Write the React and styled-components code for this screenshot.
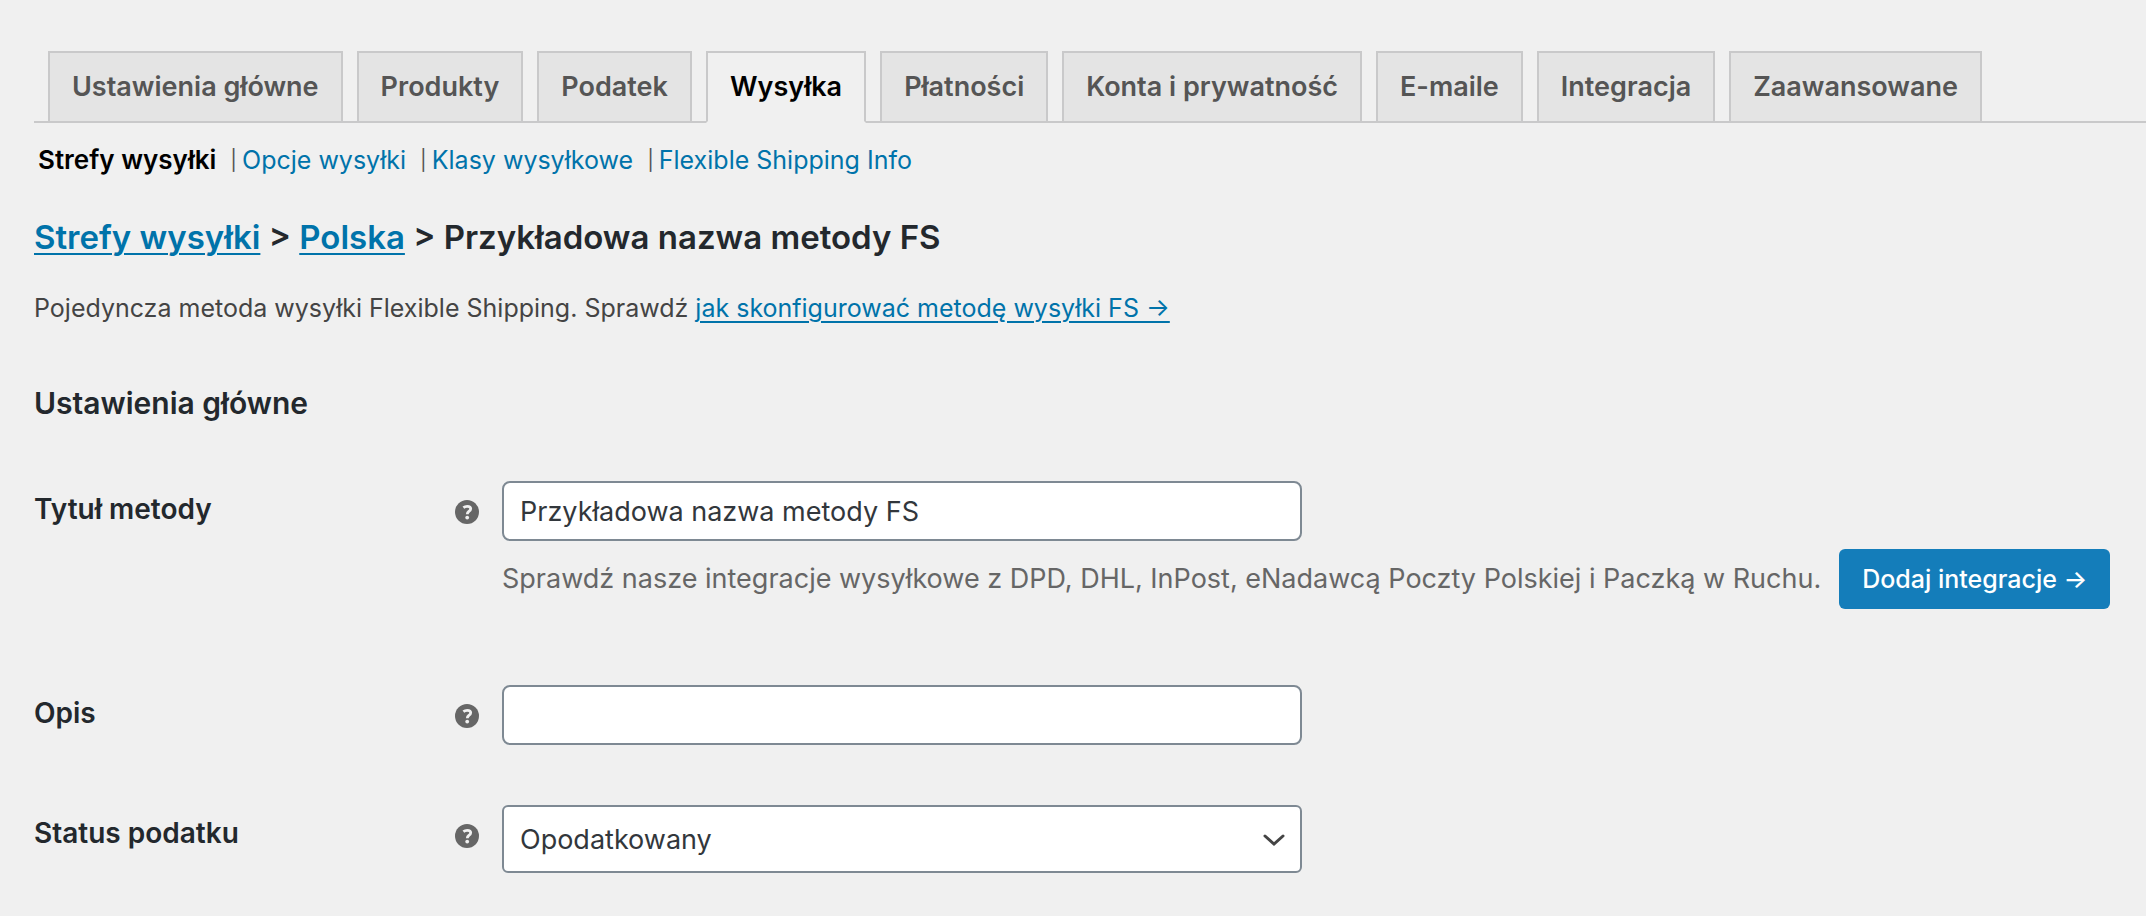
import React from "react";
import styled, { createGlobalStyle } from "styled-components";

const GlobalStyle = createGlobalStyle`
  *, *::before, *::after { box-sizing: border-box; }
  body {
    margin: 0;
    background: #f0f0f0;
    color: #444;
    font-family: Inter, "Open Sans", sans-serif;
    font-size: 25px;
    line-height: 40px;
  }
`;

const Page = styled.main`
  padding: 51px 0 30px 34px;
`;

const Tabs = styled.nav`
  display: flex;
  gap: 14px;
  padding-left: 14px;
  border-bottom: 2px solid #c9c9ca;
`;

const Tab = styled.a`
  margin-bottom: -2px;
  padding: 10px 22px;
  border: 2px solid #c9c9ca;
  border-bottom-color: ${(p) => (p.$active ? "#f0f0f0" : "#c9c9ca")};
  background: ${(p) => (p.$active ? "#f0f0f0" : "#e4e4e4")};
  color: ${(p) => (p.$active ? "#000" : "#555")};
  font-size: 27px;
  font-weight: 600;
  line-height: 48px;
  white-space: nowrap;
  text-decoration: none;
`;

const Sections = styled.ul`
  display: flex;
  flex-wrap: wrap;
  margin: 17px 0 0;
  padding: 0 0 0 4px;
  list-style: none;
  color: #555;
`;

const SectionItem = styled.li`
  display: flex;

  & + &::before {
    content: "|";
    margin: 0 5px 0 14px;
    font-size: 20px;
  }
`;

const SectionLink = styled.a`
  color: ${(p) => (p.$active ? "#000" : "#0073aa")};
  font-size: ${(p) => (p.$active ? "26px" : "25px")};
  font-weight: ${(p) => (p.$active ? 600 : 400)};
  text-decoration: none;
`;

const Breadcrumb = styled.h1`
  margin: 33px 0 0;
  color: #23282d;
  font-size: 33px;
  font-weight: 600;
  line-height: 48px;
`;

const TextLink = styled.a`
  color: #0073aa;
  text-decoration-thickness: 2px;
  text-underline-offset: 4px;
`;

const Intro = styled.p`
  margin: 27px 0 0;
`;

const Heading = styled.h2`
  margin: 55px 0 0;
  color: #23282d;
  font-size: 30px;
  font-weight: 600;
  line-height: 40px;
`;

const Form = styled.form`
  display: flex;
  flex-direction: column;
  margin-top: 28px;
`;

const Row = styled.div`
  display: grid;
  grid-template-columns: 421px 47px minmax(0, 1fr);
  padding: 30px 0;
`;

const Label = styled.label`
  padding-top: 8px;
  color: #23282d;
  font-size: 28px;
  font-weight: 600;
`;

const Help = styled.svg`
  width: 24px;
  height: 24px;
  margin-top: 19px;
`;

const Field = styled.div`
  display: flex;
  flex-direction: column;
  align-items: flex-start;
`;

const TextInput = styled.input`
  width: 800px;
  max-width: 100%;
  height: 60px;
  padding: 0 16px;
  border: 2px solid #7e8993;
  border-radius: 8px;
  background: #fff;
  color: #32373c;
  font-family: inherit;
  font-size: 27px;
`;

const SelectWrap = styled.div`
  display: grid;
  align-items: center;
  width: 800px;
  max-width: 100%;
`;

const Select = styled.select`
  grid-area: 1 / 1;
  width: 100%;
  height: 68px;
  padding: 0 48px 0 16px;
  border: 2px solid #7e8993;
  border-radius: 6px;
  background: #fff;
  color: #32373c;
  font-family: inherit;
  font-size: 27px;
  appearance: none;
`;

const Chevron = styled.svg`
  grid-area: 1 / 1;
  justify-self: end;
  width: 24px;
  height: 16px;
  margin: 2px 16px 0 0;
  pointer-events: none;
`;

const Note = styled.div`
  display: flex;
  align-items: center;
  gap: 18px;
  margin: 8px 0 16px;
  color: #666;
  font-size: 27px;
`;

const ActionButton = styled.button`
  flex: none;
  height: 60px;
  padding: 0 23px;
  border: 0;
  border-radius: 6px;
  background: #147dba;
  color: #fff;
  font-family: inherit;
  font-size: 25px;
  font-weight: 500;
`;

const tabs = [
  "Ustawienia główne",
  "Produkty",
  "Podatek",
  "Wysyłka",
  "Płatności",
  "Konta i prywatność",
  "E-maile",
  "Integracja",
  "Zaawansowane",
];

const sections = [
  "Strefy wysyłki",
  "Opcje wysyłki",
  "Klasy wysyłkowe",
  "Flexible Shipping Info",
];

function HelpIcon() {
  return (
    <Help viewBox="0 0 24 24" aria-hidden="true">
      <circle cx="12" cy="12" r="12" fill="#666" />
      <path
        d="M8.4 7.6c1-.8 2.300-1.300 3.800-1.300 2.100 0 3.500.9 3.500 2.500 0 1.400-.9 2-1.900 2.700-1 .7-1.500 1.300-1.500 2.700"
        fill="none"
        stroke="#f0f0f0"
        strokeWidth="2.8"
      />
      <circle cx="12.2" cy="17.6" r="1.9" fill="#f0f0f0" />
    </Help>
  );
}

function FormRow({ id, label, children }) {
  return (
    <Row>
      <Label htmlFor={id}>{label}</Label>
      <HelpIcon />
      <Field>{children}</Field>
    </Row>
  );
}

export default function App() {
  return (
    <>
      <GlobalStyle />
      <Page>
        <Tabs>
          {tabs.map((name) => (
            <Tab key={name} href="#" $active={name === "Wysyłka"}>
              {name}
            </Tab>
          ))}
        </Tabs>
        <Sections>
          {sections.map((name, i) => (
            <SectionItem key={name}>
              <SectionLink href="#" $active={i === 0}>
                {name}
              </SectionLink>
            </SectionItem>
          ))}
        </Sections>
        <Breadcrumb>
          <TextLink href="#">Strefy wysyłki</TextLink> &gt;{" "}
          <TextLink href="#">Polska</TextLink> &gt; Przykładowa nazwa metody FS
        </Breadcrumb>
        <Intro>
          Pojedyncza metoda wysyłki Flexible Shipping. Sprawdź{" "}
          <TextLink href="#">jak skonfigurować metodę wysyłki FS →</TextLink>
        </Intro>
        <Heading>Ustawienia główne</Heading>
        <Form>
          <FormRow id="title" label="Tytuł metody">
            <TextInput id="title" type="text" defaultValue="Przykładowa nazwa metody FS" />
            <Note>
              <span>
                Sprawdź nasze integracje wysyłkowe z DPD, DHL, InPost, eNadawcą Poczty Polskiej i
                Paczką w Ruchu.
              </span>
              <ActionButton type="button">Dodaj integracje →</ActionButton>
            </Note>
          </FormRow>
          <FormRow id="description" label="Opis">
            <TextInput id="description" type="text" />
          </FormRow>
          <FormRow id="tax-status" label="Status podatku">
            <SelectWrap>
              <Select id="tax-status" defaultValue="taxable">
                <option value="taxable">Opodatkowany</option>
                <option value="none">Brak</option>
              </Select>
              <Chevron viewBox="0 0 24 16" aria-hidden="true">
                <path
                  d="M3 4l9 8 9-8"
                  fill="none"
                  stroke="#444"
                  strokeWidth="3"
                  strokeLinecap="round"
                />
              </Chevron>
            </SelectWrap>
          </FormRow>
        </Form>
      </Page>
    </>
  );
}
